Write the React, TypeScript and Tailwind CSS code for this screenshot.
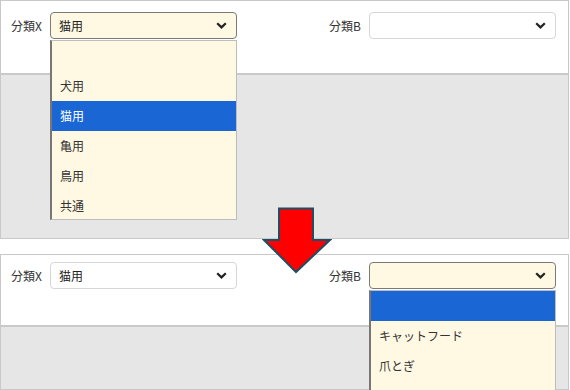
import React from "react";

const FONT = { fontFamily: '"Noto Sans CJK JP", "Noto Sans", sans-serif' };

function Chevron() {
  return (
    <svg width="11" height="7" viewBox="0 0 11 7" className="shrink-0">
      <polyline points="1.2,1.2 5.5,5.4 9.8,1.2" fill="none" stroke="#222" strokeWidth="2.2" />
    </svg>
  );
}

type SelectProps = {
  value: string;
  open?: boolean;
  items?: string[];
  active?: number;
  listHeight?: string;
};

function Select({ value, open, items = [], active = -1, listHeight }: SelectProps) {
  return (
    <div className="relative w-[187px]">
      <div
        className={
          open
            ? "h-[27px] flex items-center justify-between pl-2 pr-[9px] rounded-[4px] border border-[#7a7a7a] bg-[#fff8e3] text-[12px] text-[#222]"
            : "h-[27px] flex items-center justify-between pl-2 pr-[9px] rounded-[4px] border border-[#d6d6d6] bg-white text-[12px] text-[#222]"
        }
      >
        <span>{value}</span>
        <Chevron />
      </div>
      {open && (
        <div
          className={
            "absolute left-0 top-[28px] w-full z-10 overflow-hidden bg-[#fff8e3] border border-[#bdbdbd] border-l-[#777] border-l-2 " +
            (listHeight ?? "")
          }
        >
          {items.map((it, i) => (
            <div
              key={i}
              className={
                i === active
                  ? "h-[30px] flex items-center px-2 text-[12px] bg-[#1a66d4] text-white"
                  : "h-[30px] flex items-center px-2 text-[12px] text-[#333]"
              }
            >
              {it}
            </div>
          ))}
        </div>
      )}
    </div>
  );
}

function Panel({
  children,
  height,
  header,
}: {
  children: React.ReactNode;
  height: string;
  header: string;
}) {
  return (
    <div className={"flex flex-col border border-[#c9c9c9] " + height}>
      <div className={"bg-white border-b-2 border-[#c9c9c9] flex justify-between pl-[10px] pr-[12px] " + header}>
        {children}
      </div>
      <div className="flex-1 bg-[#e6e6e6]" />
    </div>
  );
}

function Field({ label, children }: { label: string; children: React.ReactNode }) {
  return (
    <div className="flex items-start gap-[8px]">
      <span className="h-[27px] flex items-center text-[12px] text-[#333]">{label}</span>
      {children}
    </div>
  );
}

export default function App() {
  return (
    <div className="relative w-[570px] h-[390px] bg-white flex flex-col gap-[15px] pr-[1px]" style={FONT}>
      <Panel height="h-[239px]" header="h-[74px] pt-[11px]">
        <Field label="分類X">
          <Select
            value="猫用"
            open
            items={["", "犬用", "猫用", "亀用", "鳥用", "共通"]}
            active={2}
            listHeight="h-[180px]"
          />
        </Field>
        <Field label="分類B">
          <Select value="" />
        </Field>
      </Panel>

      <Panel height="h-[136px]" header="h-[72px] pt-[7px]">
        <Field label="分類X">
          <Select value="猫用" />
        </Field>
        <Field label="分類B">
          <Select
            value=""
            open
            items={["", "キャットフード", "爪とぎ", ""]}
            active={0}
            listHeight="h-[110px]"
          />
        </Field>
      </Panel>

      <svg
        className="absolute left-[262px] top-[207px] z-20"
        width="70"
        height="68"
        viewBox="0 0 70 68"
      >
        <polygon
          points="17,1.5 51,1.5 51,33 68,33 34,65 2,33 17,33"
          fill="#ff0000"
          stroke="#1d4e63"
          strokeWidth="2"
          strokeLinejoin="miter"
        />
      </svg>
    </div>
  );
}
